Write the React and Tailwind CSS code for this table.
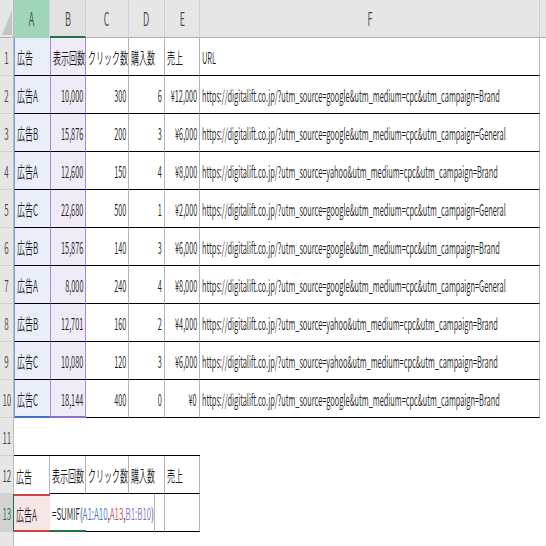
import React from 'react';

const FONT = "font-['Noto_Sans_CJK_JP','Noto_Sans',sans-serif]";

const url = (src, camp) =>
  `https://digitalift.co.jp/?utm_source=${src}&utm_medium=cpc&utm_campaign=${camp}`;

const rows = [
  ['広告A', '10,000', '300', '6', '¥12,000', 'google', 'Brand'],
  ['広告B', '15,876', '200', '3', '¥6,000', 'google', 'General'],
  ['広告A', '12,600', '150', '4', '¥8,000', 'yahoo', 'Brand'],
  ['広告C', '22,680', '500', '1', '¥2,000', 'google', 'General'],
  ['広告B', '15,876', '140', '3', '¥6,000', 'google', 'Brand'],
  ['広告A', '8,000', '240', '4', '¥8,000', 'google', 'General'],
  ['広告B', '12,701', '160', '2', '¥4,000', 'yahoo', 'Brand'],
  ['広告C', '10,080', '120', '3', '¥6,000', 'yahoo', 'Brand'],
  ['広告C', '18,144', '400', '0', '¥0', 'google', 'Brand'],
];

// squeezed text, like the narrow grid font in the sheet
const L = ({ children }) => (
  <span className="inline-block whitespace-nowrap origin-left scale-x-50">{children}</span>
);
// latin / digits
const LN = ({ children }) => (
  <span className="inline-block whitespace-nowrap origin-left scale-x-[0.465]">{children}</span>
);
const RN = ({ children }) => (
  <span className="inline-block whitespace-nowrap origin-right scale-x-[0.46]">{children}</span>
);
const C = ({ children }) => (
  <span className="inline-block whitespace-nowrap origin-center scale-x-50">{children}</span>
);

function RowHead({ n, active }) {
  return (
    <div
      className={`w-[14px] shrink-0 flex items-center justify-center border-b border-b-[#d2d2d2] ${
        active
          ? 'bg-[#d2d2d2] text-[#217346] border-r border-r-[#217346]'
          : 'bg-[#e6e6e6] text-[#444] border-r border-r-[#bcbcbc]'
      }`}
    >
      <C>{n}</C>
    </div>
  );
}

function ColHead({ label, w, className = '' }) {
  return (
    <div
      className={`${w} shrink-0 flex items-center justify-center text-[18px] text-[#444] border-r border-r-[#d0d0d0] ${className}`}
    >
      <C>{label}</C>
    </div>
  );
}

const cell = 'shrink-0 flex items-center px-[2px] pt-[1px] overflow-visible';

export default function App() {
  return (
    <div className={`w-[546px] h-[546px] overflow-hidden bg-white text-[16px] font-[350] text-[#1a1a1a] ${FONT}`}>
      {/* column header */}
      <div className="flex h-[38px] bg-[#e6e6e6]">
        <div className="w-[14px] shrink-0 border-r border-r-[#bcbcbc] border-b border-b-[#b0b0b0] flex items-end justify-end">
          <svg width="13" height="37" viewBox="0 0 13 37">
            <polygon points="12,10 12,35 2,35" fill="#c4c4c4" />
          </svg>
        </div>
        <ColHead label="A" w="w-[36px]" className="bg-[#a0d6b8] border-b border-b-[#a0d6b8]" />
        <ColHead label="B" w="w-[36px]" className="bg-[#e1e1e1] border-b-2 border-b-[#217346]" />
        <ColHead label="C" w="w-[43px]" className="border-b border-b-[#b0b0b0]" />
        <ColHead label="D" w="w-[36px]" className="border-b border-b-[#b0b0b0]" />
        <ColHead label="E" w="w-[35px]" className="border-b border-b-[#b0b0b0]" />
        <ColHead label="F" w="w-[340px]" className="border-r-[#b0b0b0] border-b border-b-[#b0b0b0]" />
        <div className="flex-1 border-b border-b-[#b0b0b0]" />
      </div>

      {/* row 1: headings */}
      <div className="flex h-[38px]">
        <RowHead n={1} />
        <div className={`${cell} w-[36px] bg-[#e9eef9] border-l border-l-[#7d9de0] border-b border-b-black`}>
          <L>広告</L>
        </div>
        <div className={`${cell} w-[36px] bg-[#f1ebf8] border-x border-x-[#a58bdb] border-b border-b-black`}>
          <L>表示回数</L>
        </div>
        <div className={`${cell} w-[43px] border-r border-r-[#b4b4b4] border-b border-b-black`}>
          <L>クリック数</L>
        </div>
        <div className={`${cell} w-[36px] border-r border-r-[#b4b4b4] border-b border-b-black`}>
          <L>購入数</L>
        </div>
        <div className={`${cell} w-[35px] border-r border-r-[#b4b4b4] border-b border-b-black`}>
          <L>売上</L>
        </div>
        <div className={`${cell} w-[340px] border-r border-r-[#b4b4b4] border-b border-b-black`}>
          <LN>URL</LN>
        </div>
      </div>

      {/* rows 2-10: data */}
      {rows.map((r, i) => {
        const last = i === rows.length - 1;
        return (
          <div key={i} className="flex h-[38px]">
            <RowHead n={i + 2} />
            <div
              className={`${cell} w-[36px] bg-[#e9eef9] border-l border-l-[#7d9de0] ${
                last ? 'border-b-2 border-b-[#4472c4]' : 'border-b border-b-black'
              }`}
            >
              <L>{r[0]}</L>
            </div>
            <div
              className={`${cell} w-[36px] justify-end bg-[#f1ebf8] border-x border-x-[#a58bdb] ${
                last ? 'border-b-2 border-b-[#8e6fd3]' : 'border-b border-b-black'
              }`}
            >
              <RN>{r[1]}</RN>
            </div>
            <div className={`${cell} w-[43px] justify-end border-r border-r-[#b4b4b4] border-b border-b-black`}>
              <RN>{r[2]}</RN>
            </div>
            <div className={`${cell} w-[36px] justify-end border-r border-r-[#b4b4b4] border-b border-b-black`}>
              <RN>{r[3]}</RN>
            </div>
            <div className={`${cell} w-[35px] justify-end border-r border-r-[#b4b4b4] border-b border-b-black`}>
              <RN>{r[4]}</RN>
            </div>
            <div className={`${cell} w-[340px] border-r border-r-[#b4b4b4] border-b border-b-black`}>
              <LN>{url(r[5], r[6])}</LN>
            </div>
          </div>
        );
      })}

      {/* row 11: empty */}
      <div className="flex h-[38px]">
        <RowHead n={11} />
        <div className="w-[186px] shrink-0 border-b border-b-black" />
      </div>

      {/* row 12: summary headings */}
      <div className="flex h-[38px]">
        <RowHead n={12} />
        <div className={`${cell} w-[36px] border-r border-r-[#b4b4b4]`}>
          <L>広告</L>
        </div>
        <div className={`${cell} w-[36px] border-r border-r-[#b4b4b4] border-b border-b-black`}>
          <L>表示回数</L>
        </div>
        <div className={`${cell} w-[43px] border-r border-r-[#b4b4b4] border-b border-b-black`}>
          <L>クリック数</L>
        </div>
        <div className={`${cell} w-[36px] border-r border-r-[#b4b4b4] border-b border-b-black`}>
          <L>購入数</L>
        </div>
        <div className={`${cell} w-[35px] border-r border-r-[#b4b4b4] border-b border-b-black`}>
          <L>売上</L>
        </div>
      </div>

      {/* row 13: formula being edited */}
      <div className="flex h-[38px]">
        <RowHead n={13} active />
        <div className={`${cell} w-[36px] bg-[#f8e5e5] border-y-2 border-y-[#c94442]`}>
          <L>広告A</L>
        </div>
        <div className={`${cell} w-[36px] border-b-2 border-b-[#217346] relative z-10`}>
          <span className="inline-block whitespace-nowrap origin-left scale-x-50">
            =SUMIF(<span className="text-[#3d6fd1]">A1:A10</span>,<span className="text-[#d24545]">A13</span>,
            <span className="text-[#8b6dd0]">B1:B10</span>)
          </span>
        </div>
        <div className="w-[43px] shrink-0 border-b border-b-black" />
        <div className="w-[26px] shrink-0 border-r border-r-[#b4b4b4] border-b border-b-black" />
        <div className="w-[10px] shrink-0 border-r border-r-[#b4b4b4] border-b border-b-black" />
        <div className="w-[35px] shrink-0 border-r border-r-[#b4b4b4] border-b border-b-black" />
      </div>

      {/* row 14 (cut off by the window) */}
      <div className="flex h-[38px]">
        <RowHead n={14} />
      </div>
    </div>
  );
}
